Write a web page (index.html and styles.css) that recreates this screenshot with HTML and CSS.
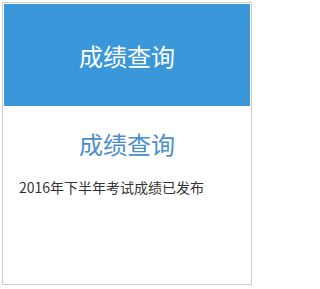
FILE: index.html
```html
<!DOCTYPE html>
<html lang="zh-CN">
<head>
<meta charset="utf-8">
<link rel="stylesheet" href="styles.css">
</head>
<body>
<div class="card">
  <div class="card-head">成绩查询</div>
  <div class="card-body">
    <h2 class="card-title">成绩查询</h2>
    <p class="card-item">2016年下半年考试成绩已发布</p>
  </div>
</div>
</body>
</html>
```
FILE: styles.css
```css
html, body {
  margin: 0;
  padding: 0;
  background: #fff;
}
body {
  font-family: "Noto Sans CJK SC", "Noto Sans", sans-serif;
}
.card {
  box-sizing: border-box;
  width: 250px;
  height: 283px;
  margin: 2px;
  border: 1px solid #cccccc;
  padding: 1px;
}
.card-head {
  height: 102px;
  background: #3a98da;
  color: #fff;
  font-size: 24px;
  display: flex;
  align-items: center;
  justify-content: center;
}
.card-body {
  padding: 0 15px;
}
.card-title {
  margin: 23px 0 0;
  font-size: 24px;
  font-weight: normal;
  line-height: 30px;
  color: #4b8ecb;
  text-align: center;
}
.card-item {
  margin: 18px 0 0;
  font-size: 14px;
  line-height: 20px;
  color: #333;
}
```
